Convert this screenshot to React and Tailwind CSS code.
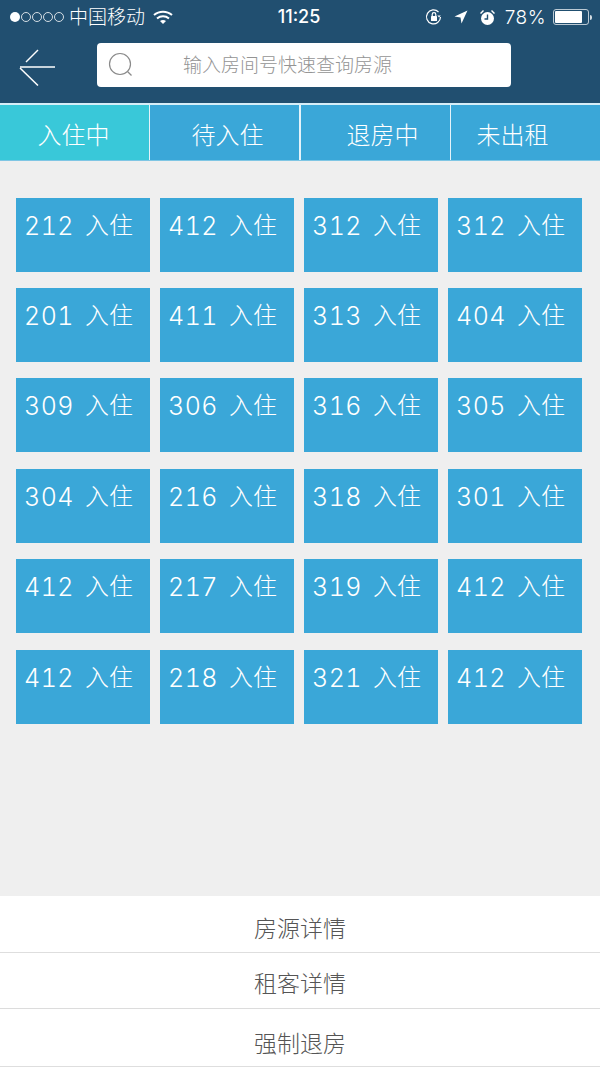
import React from "react";

const tabs = [
  { label: "入住中", cls: "w-[150px] bg-[#39c8d9] pr-[2px] border-r" },
  { label: "待入住", cls: "w-[151px] bg-[#3aa7d8] pl-[6px] border-r-2" },
  { label: "退房中", cls: "w-[150px] bg-[#3aa7d8] pl-[14px] border-r" },
  { label: "未出租", cls: "flex-1 bg-[#3aa7d8] pr-[26px]" },
];
const rooms = [
  "212", "412", "312", "312",
  "201", "411", "313", "404",
  "309", "306", "316", "305",
  "304", "216", "318", "301",
  "412", "217", "319", "412",
  "412", "218", "321", "412",
];
const cjk = "font-['Inter','Noto_Sans_CJK_SC',sans-serif]";

function StatusBar() {
  return (
    <div className={`flex h-[34px] items-center text-white pl-[10px] pr-[8px] ${cjk}`}>
      <div className="flex w-[267px] items-center">
        <div className="flex gap-[1px]">
          <span className="h-[10px] w-[10px] rounded-full bg-white" />
          {[0, 1, 2, 3].map((i) => (
            <span key={i} className="h-[10px] w-[10px] rounded-full border border-white/80" />
          ))}
        </div>
        <span className="ml-[5px] text-[19px] font-light leading-none">中国移动</span>
        <svg className="ml-[8px]" width="20" height="15" viewBox="0 0 20 15" fill="none" stroke="white" strokeWidth="2">
          <path d="M1 5c5-4.500 13-4.500 18 0" />
          <path d="M4 8.500c3.500-3 8.500-3 12 0" />
          <path d="M10 14l-3-3c1.800-1.300 4.200-1.300 6 0z" fill="white" stroke="none" />
        </svg>
      </div>
      <span className="w-[44px] text-center text-[18px] font-medium leading-none whitespace-nowrap">11:25</span>
      <div className="ml-auto flex items-center">
        <svg width="18" height="18" viewBox="0 0 18 18" fill="none" stroke="white" strokeWidth="1.200">
          <path d="M15.500 9a7 7 0 1 1-2-5" />
          <path d="M15.800 7.500l-1.800 2-1.600-2z" fill="white" stroke="none" />
          <rect x="6" y="8" width="6" height="5" rx="0.500" fill="white" stroke="none" />
          <path d="M7.200 8V6.500a1.800 1.800 0 0 1 3.600 0V8" />
        </svg>
        <svg className="ml-[11px]" width="14" height="14" viewBox="0 0 14 14" fill="white">
          <path d="M13.500 0.500L0.500 6.500l6 1 1 6z" />
        </svg>
        <svg className="ml-[11px]" width="17" height="17" viewBox="0 0 17 17" fill="white">
          <circle cx="8.500" cy="9.500" r="6.500" />
          <path d="M1 4l3-3 1 1-3 3zM16 4l-3-3-1 1 3 3z" />
          <path d="M8.500 5.500v4.500H5.500" fill="none" stroke="#214f70" strokeWidth="1.400" />
        </svg>
        <span className="ml-[9px] text-[19px] font-light leading-none tracking-[0.5px]">78%</span>
        <div className="ml-[7px] flex items-center">
          <div className="h-[16px] w-[36px] rounded-[3px] border border-white/70 p-[1px]">
            <div className="h-full w-[27px] rounded-[1px] bg-white" />
          </div>
          <span className="ml-[1px] h-[5px] w-[2px] rounded-r-sm bg-white/80" />
        </div>
      </div>
    </div>
  );
}

function NavBar() {
  return (
    <div className="flex h-[69px] items-start">
      <svg className="ml-[18px] mt-[14px]" width="38" height="38" viewBox="0 0 38 38" fill="none" stroke="white" strokeWidth="1.500">
        <path d="M2 19h35" />
        <path d="M2 20l18 17.500" />
        <path d="M8 14L20 2" />
      </svg>
      <div className="ml-[41px] mt-[9px] flex h-[44px] w-[414px] items-center rounded-[4px] bg-white">
        <svg className="ml-[11px]" width="26" height="26" viewBox="0 0 26 26" fill="none" stroke="#8a8a8a" strokeWidth="1.200">
          <circle cx="12" cy="12" r="10.500" />
          <path d="M19.500 19.500l4 4" />
        </svg>
        <span className={`ml-[49px] text-[19px] font-light leading-none text-[#949494] ${cjk}`}>输入房间号快速查询房源</span>
      </div>
    </div>
  );
}

function Tabs() {
  return (
    <div className={`flex h-[56px] border-b border-[#7fc6e4] ${cjk}`}>
      {tabs.map((t) => (
        <div
          key={t.label}
          className={`flex items-center justify-center border-[#e4f3fa] pt-[6px] text-[24px] font-light leading-none text-white ${t.cls}`}
        >
          {t.label}
        </div>
      ))}
    </div>
  );
}

function RoomCard({ no }) {
  return (
    <div className={`flex h-[74px] items-start bg-[#3aa7d8] pl-[8px] pt-[13px] text-white ${cjk}`}>
      <span className="w-[61px] text-[25px] font-light leading-[30px] tracking-[0.500px] tabular-nums">{no}</span>
      <span className="text-[24px] font-light leading-[30px]">入住</span>
    </div>
  );
}

export default function App() {
  return (
    <div className="flex h-[1067px] w-[600px] flex-col overflow-hidden bg-[#efefef]">
      <div className="h-[103px] bg-[#214f70]">
        <StatusBar />
        <NavBar />
      </div>
      <div className="h-[2px] bg-[#d6eef8]" />
      <Tabs />
      <div className="grid grid-cols-[repeat(4,134px)] gap-x-[10px] gap-y-[16.400px] pl-[16px] pt-[36.600px]">
        {rooms.map((no, i) => (
          <RoomCard key={i} no={no} />
        ))}
      </div>
      <div className={`mt-auto bg-white text-[23px] font-light leading-none text-[#555] ${cjk}`}>
        <div className="flex h-[57px] items-center justify-center border-b border-[#dedede] pt-[10px]">房源详情</div>
        <div className="flex h-[56px] items-center justify-center border-b border-[#dcdcdc] pt-[7px]">租客详情</div>
        <div className="flex h-[58px] items-center justify-center border-b border-[#dedede] pt-[14px]">强制退房</div>
      </div>
    </div>
  );
}
